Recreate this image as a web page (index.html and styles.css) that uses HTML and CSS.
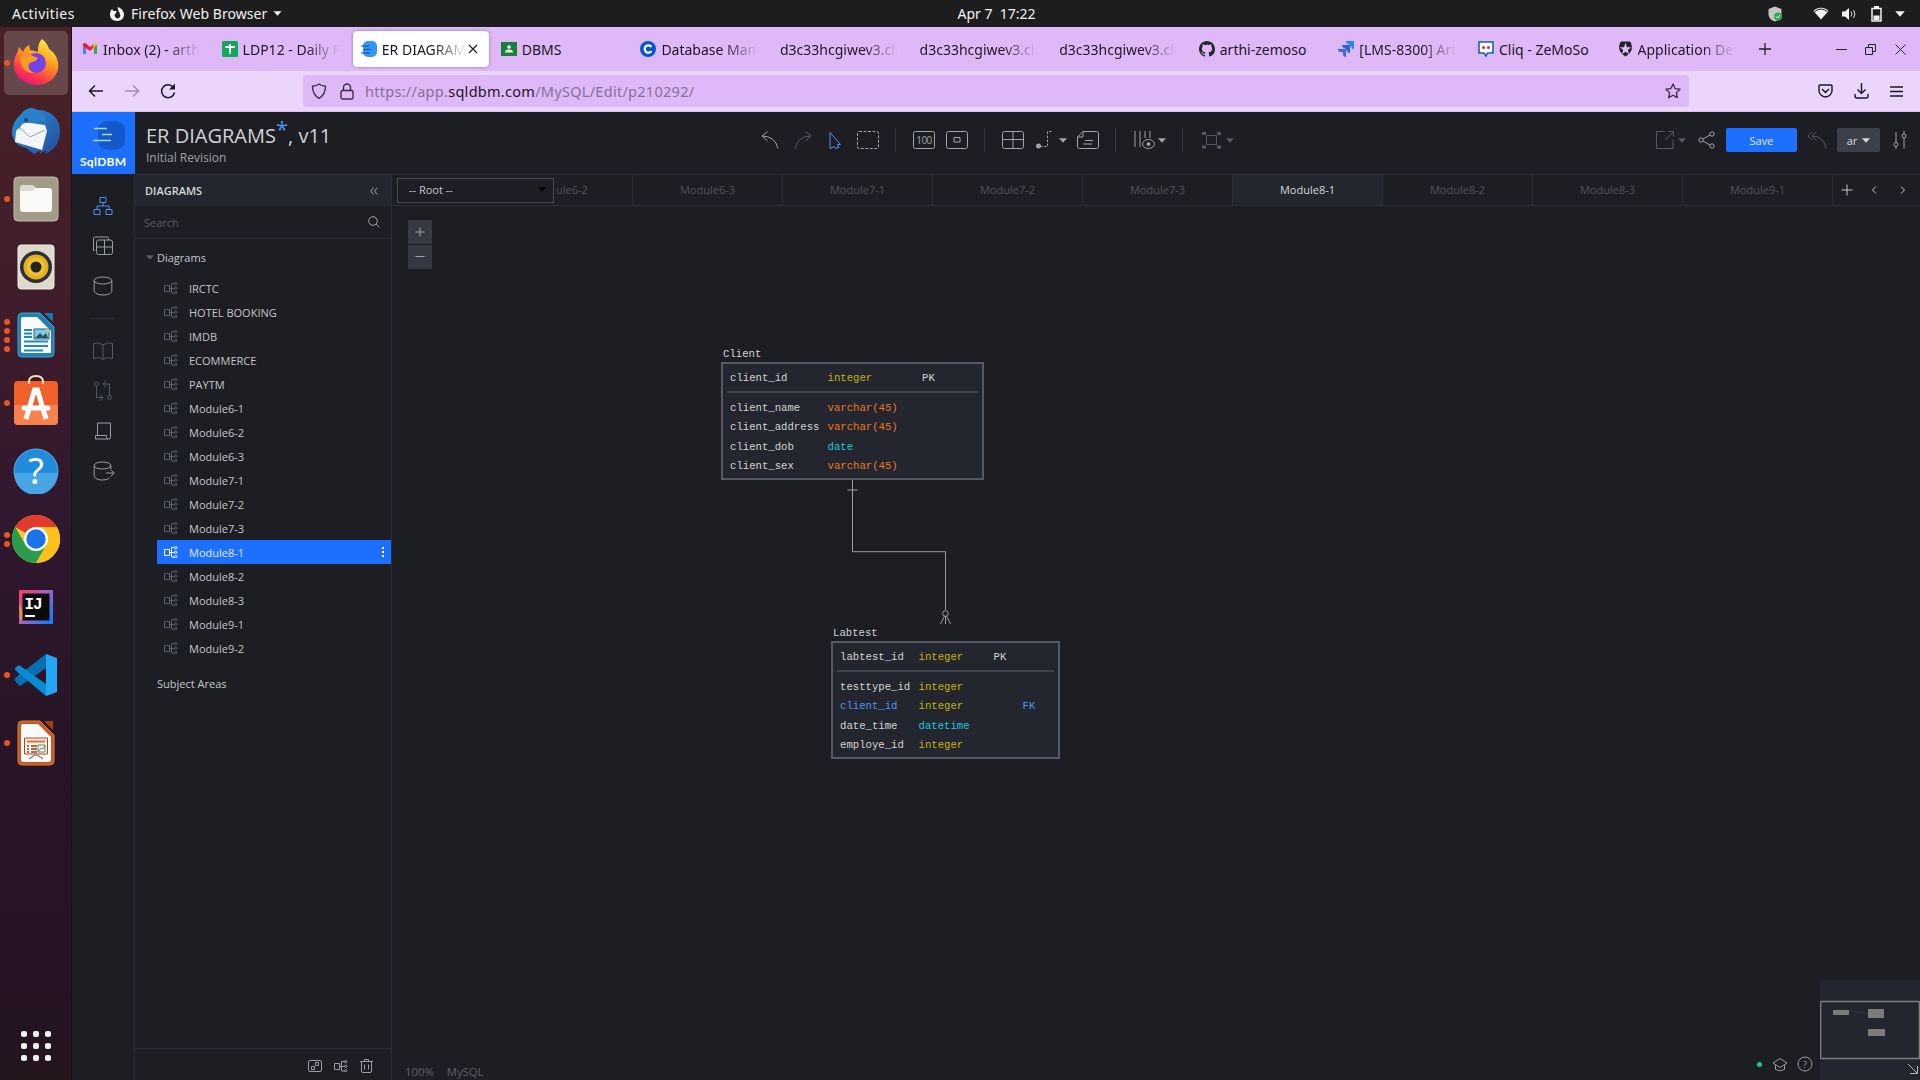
FILE: index.html
```html
<!DOCTYPE html>
<html lang="en">
<head>
<meta charset="utf-8">
<title>ER DIAGRAMS - SqlDBM</title>
<link rel="stylesheet" href="styles.css">
</head>
<body>
<svg class="defs" width="0" height="0">
  <symbol id="i-diagram" viewBox="0 0 14 12"><g fill="none" stroke="currentColor"><path d="M.5 3.500h5v6h-5zM5.500 6.500h5M10.500 1.500h-3v9.500h3"/><circle cx="11.700" cy="1.700" r="1.200"/><circle cx="11.700" cy="6.300" r="1.200"/><circle cx="11.700" cy="10.700" r="1.200"/></g></symbol>
  <symbol id="i-caret" viewBox="0 0 8 5"><path d="M0 .2h8L4 4.800z" fill="currentColor"/></symbol>
</svg>

<header class="topbar">
  <span class="activities">Activities</span>
  <span class="appmenu">
    <svg width="16" height="16" viewBox="0 0 16 16"><path d="M3 3l1.500 2L8 5 6.500 7.500A2.800 2.800 0 1 0 10.800 8c-.2-3-2.300-3-2-7C12 2 14 4.500 14.300 6l.7 1c.5 5-2.500 8-7 8S.5 12 1 7.500C1.300 5.500 2 4.500 3 3z" fill="#f2f2f2"/></svg>
    Firefox Web Browser
    <svg class="caret" width="9" height="5"><use href="#i-caret"/></svg>
  </span>
  <span class="clock">Apr 7&nbsp; 17:22</span>
  <span class="tray">
    <svg class="t-shield" width="15" height="16" viewBox="0 0 15 16"><path d="M7 .5L13.500 3v5c0 4-3 6.500-6.500 7.500C3.500 14.500.5 12 .5 8V3z" fill="#c4c9c7"/><circle cx="10" cy="10.500" r="4" fill="#35a853"/><path d="M8 10.500l1.500 1.500 2.500-3" stroke="#fff" fill="none"/></svg>
    <svg class="t-wifi" width="16" height="13" viewBox="0 0 16 13"><path d="M.5 4C4.500-.3 11.500-.3 15.500 4L8 12.500z" fill="#f2f2f2"/><path d="M1.500 4.800c4-3.500 9-3.500 13 0" stroke="#1d1d1d" fill="none"/></svg>
    <svg class="t-vol" width="16" height="14" viewBox="0 0 16 14"><path d="M1 4.500h3L8 1v12L4 9.500H1z" fill="#f2f2f2"/><path d="M10 4.500q2 2.500 0 5M12.500 3q3 4 0 8" stroke="#ddd" fill="none"/></svg>
    <svg class="t-bat" width="11" height="16" viewBox="0 0 11 16"><path d="M1 2.500h9v12.500H1z" fill="none" stroke="#f2f2f2" stroke-width="1.500"/><path d="M3 0h5v2H3zM2.500 9.500h6V14h-6z" fill="#f2f2f2"/></svg>
    <svg width="10" height="6"><use href="#i-caret" color="#f2f2f2"/></svg>
  </span>
</header>

<div class="desktop">
<nav class="dock">
  <div class="dock-item active"><i class="dots"><b></b></i>
    <svg class="up" width="48" height="48" viewBox="0 0 48 48"><defs><linearGradient id="ff" x1=".8" y1="0" x2=".3" y2="1"><stop offset="0" stop-color="#fff44f"/><stop offset=".4" stop-color="#ffa21f"/><stop offset=".75" stop-color="#ff3f46"/><stop offset="1" stop-color="#e5127d"/></linearGradient></defs><path d="M30 1c5 4 6 7 7 10 7 4 10 12 9 20-2 10-11 16-21 16S3 40 2 29C1 22 4 17 6 13l1-4 4 5c1-3 3-5 6-7l1 5c3 1 6 1 8 2 0-6 1-10 4-13z" fill="url(#ff)"/><circle cx="24" cy="25" r="10" fill="#7542e5"/><path d="M8 20c5-5 9-5 13-2l5 2c-3 5-7 3-9 6-2 5 2 8 6 9-8 1-15-5-15-15z" fill="#ff9b24"/></svg></div>
  <div class="dock-item">
    <svg width="50" height="50" viewBox="0 0 50 50"><defs><linearGradient id="tb" x1="0" y1="0" x2="1" y2="1"><stop offset="0" stop-color="#2695dc"/><stop offset="1" stop-color="#264b9c"/></linearGradient></defs><path d="M10 8C15 2 20 0 27 4c12 0 22 8 22 21 0 11-5 19-15 23l1-4-6 4 1-4-7 4-8-6C6 40 1 34 1 26 1 20 4 14 10 8z" fill="url(#tb)"/><path d="M5 25l8-9 21 3 2 6-5 19L4 36z" fill="#f4f5f6"/><path d="M8 21l11 10 15-7" fill="none" stroke="#9aa4ae"/><path d="M8 24c-1-9 5-18 14-20 6-1 12 3 13 12-6-1-12-1-16 1-6 0-8-1-11 7z" fill="#2b80c8"/><circle cx="15" cy="14" r="2" fill="#174775"/></svg></div>
  <div class="dock-item"><i class="dots"><b></b></i>
    <svg width="46" height="46" viewBox="0 0 46 46"><rect x="1" y="1" width="44" height="44" rx="4" fill="#a29b88" stroke="#c2bbab"/><path d="M7 12q0-3 3-3h10l4 4h12q3 0 3 3v17H7z" fill="#dedad1"/><rect x="7" y="15" width="32" height="21" rx="3" fill="#faf9f8"/><path d="M7 20v-5h12l4-3h13q3 0 3 3v5z" fill="#faf9f8"/></svg></div>
  <div class="dock-item">
    <svg width="38" height="46" viewBox="0 0 38 46"><rect x="1" y="1" width="36" height="44" rx="3" fill="#ded9cd" stroke="#efebe3"/><circle cx="19" cy="23" r="16" fill="#2c2f3b"/><circle cx="19" cy="23" r="12.500" fill="#e3b21a"/><circle cx="19" cy="23" r="9" fill="#efc434"/><circle cx="19" cy="23" r="5.500" fill="#242424"/></svg></div>
  <div class="dock-item"><i class="dots"><b></b><b></b><b></b><b></b></i>
    <svg width="38" height="46" viewBox="0 0 38 46"><path d="M5 1h18l14 14v26q0 4-4 4H5q-4 0-4-4V5q0-4 4-4z" fill="#2081b5" stroke="#3fa0cd"/><path d="M6 5h14l14 14v22H6q-2 0-2-2V7q0-2 2-2z" fill="#fafafa"/><path d="M27 1h9v9z" fill="#1778ad"/><path d="M7 18h8M7 21.500h8M7 25h8M7 29.500h24M7 34h24M7 38.500h19" stroke="#2387bd" stroke-width="2"/><path d="M17 17h15v10H17z" fill="#7ccae9" stroke="#17658f"/><path d="M18 26l5-5 3 3 3-3 2 5z" fill="#355052"/><path d="M28 17h4v4z" fill="#f1c232"/></svg></div>
  <div class="dock-item"><i class="dots"><b></b></i>
    <svg class="software" width="46" height="52" viewBox="0 0 46 52"><path d="M1 11q0-4 4-4h36q4 0 4 4v36q0 4-4 4H5q-4 0-4-4z" fill="#f0602a"/><path d="M1 31h44v16q0 4-4 4H5q-4 0-4-4z" fill="#f5824d"/><path d="M16 10V8q0-6 7-6t7 6v2" fill="none" stroke="#f5dfbd" stroke-width="2"/><path d="M13 45l8.500-29h3L33 45" fill="none" stroke="#fff" stroke-width="5"/><path d="M11 34h24" stroke="#fff" stroke-width="5" stroke-linecap="round"/></svg></div>
  <div class="dock-item">
    <svg width="46" height="46" viewBox="0 0 46 46"><circle cx="23" cy="23" r="22" fill="#218bdc" stroke="#58b0ec"/><path d="M1 25a22 22 0 0 0 44 0z" fill="#48a5e5"/><text x="23" y="36" text-anchor="middle" font-family="Noto Sans" font-size="36" fill="#fff">?</text></svg></div>
  <div class="dock-item"><i class="dots"><b></b><b></b></i>
    <svg width="48" height="48" viewBox="0 0 48 48"><circle cx="24" cy="24" r="24" fill="#fcc934"/><path d="M24 24L3.200 12A24 24 0 0 1 44.800 12H24z" fill="#e23b2e"/><path d="M3.200 12A24 24 0 0 0 24 48l10.400-18L24 24 13.600 30z" fill="#2b9c4b"/><path d="M24 12h20.800A24 24 0 0 1 24 48l10.400-18z" fill="#fcc21b"/><circle cx="24" cy="24" r="12" fill="#fff"/><circle cx="24" cy="24" r="9.700" fill="#1a73e8"/></svg></div>
  <div class="dock-item">
    <svg width="34" height="34" viewBox="0 0 34 34"><defs><linearGradient id="ij" x1="0" x2="1" y1="0" y2=".8"><stop offset="0" stop-color="#fe3869"/><stop offset=".5" stop-color="#aa61ba"/><stop offset="1" stop-color="#157eff"/></linearGradient></defs><path d="M0 0h34v34H0z" fill="url(#ij)"/><path d="M0 13l6 14-5 4z" fill="#d9964b"/><path d="M3.500 3.500h27v27h-27z" fill="#0b0b0c"/><text x="5.500" y="19" font-family="Liberation Mono" font-weight="bold" font-size="16" letter-spacing="-1" fill="#fff">IJ</text><path d="M6 25h10v2H6z" fill="#fff"/></svg></div>
  <div class="dock-item"><i class="dots"><b></b></i>
    <svg width="42" height="42" viewBox="0 0 42 42"><path d="M31 0v14L5 32l-5-5V24z" fill="#0870b0"/><path d="M4 11L31 30v12L0 16v-2z" fill="#078bd2"/><path d="M31 0l11 4v34l-11 4z" fill="#24a7f2"/></svg></div>
  <div class="dock-item"><i class="dots"><b></b></i>
    <svg width="38" height="46" viewBox="0 0 38 46"><path d="M5 1h18l14 14v26q0 4-4 4H5q-4 0-4-4V5q0-4 4-4z" fill="#c75a20" stroke="#dc7b3b"/><path d="M6 4h15l13 13v23q0 2-2 2H6q-2 0-2-2V6q0-2 2-2z" fill="#fafafa"/><path d="M27 1h9v9z" fill="#a34412"/><path d="M7.500 18h23v16h-23z" fill="#fff5ec" stroke="#b04716"/><path d="M10 21.500h18" stroke="#dc702c" stroke-width="2"/><path d="M10 26h2m-2 3h2m-2 3h2m2-6h6m-6 3h6m-6 3h6" stroke="#8e3b13" stroke-width="1.500"/><path d="M21 25h7v7h-7z" fill="#fff" stroke="#777"/><path d="M22 31l2-3 2 1 1.500-3" stroke="#39a643" fill="none"/><path d="M12 39l6-4h2l6 4" stroke="#888" stroke-width="1.500" fill="none"/></svg></div>
  <div class="apps"><b></b><b></b><b></b><b></b><b></b><b></b><b></b><b></b><b></b></div>
</nav>

<main class="window">
  <div class="tabstrip">
    <div class="btab"><svg width="16" height="16" viewBox="0 0 16 16"><path d="M1 3.500V13h3V6z" fill="#4285f4"/><path d="M12 6v7h3V3.500z" fill="#34a853"/><path d="M1 5V3.500C1 2 3 1.500 4 2.500l4 3.500v4z" fill="#ea1c2e"/><path d="M8 6l3.500-3V7L8 10z" fill="#e0344a"/><path d="M11.500 3c1.500-1.500 3.500-.7 3.500 1l-3.500 3z" fill="#fbbc04"/></svg><span>Inbox (2) - arthi</span></div>
    <div class="btab"><svg width="16" height="16" viewBox="0 0 16 16"><rect width="16" height="16" rx="1.500" fill="#0fa958"/><path d="M3 6h10M8 3v10" stroke="#fff" stroke-width="2"/></svg><span>LDP12 - Daily Pro</span></div>
    <div class="btab current"><svg width="16" height="16" viewBox="0 0 16 16"><rect x="2" y="0" width="14" height="16" rx="5" fill="#3395ff"/><path d="M0 5h8M3 8.500h7M0 12h9" stroke="#13508f" stroke-width="1.200"/></svg><span>ER DIAGRAMS</span><svg class="close" width="10" height="10" viewBox="0 0 10 10"><path d="M1 1l8 8M9 1L1 9" stroke="#222" stroke-width="1.200"/></svg></div>
    <div class="btab"><svg width="16" height="16" viewBox="0 0 16 16"><path d="M0 1h16v14H0z" fill="#188038"/><circle cx="8" cy="6" r="1.800" fill="#fff"/><path d="M4 11.500q0-3 4-3t4 3z" fill="#fff"/></svg><span>DBMS</span></div>
    <div class="btab"><svg width="16" height="16" viewBox="0 0 16 16"><circle cx="8" cy="8" r="8" fill="#0056d2"/><path d="M11.500 6A3.700 3.700 0 1 0 11.500 10" fill="none" stroke="#fff" stroke-width="2.200"/></svg><span>Database Manag</span></div>
    <div class="btab"><span>d3c33hcgiwev3.clo</span></div>
    <div class="btab"><span>d3c33hcgiwev3.clo</span></div>
    <div class="btab"><span>d3c33hcgiwev3.clo</span></div>
    <div class="btab"><svg width="16" height="16" viewBox="0 0 16 16"><path d="M8 0C3.580 0 0 3.580 0 8c0 3.540 2.290 6.530 5.470 7.590.4.070.55-.17.55-.38 0-.19-.01-.82-.01-1.490-2.010.37-2.530-.49-2.690-.94-.09-.23-.48-.94-.82-1.130-.28-.15-.68-.52-.01-.53.63-.01 1.080.58 1.230.82.72 1.210 1.870.87 2.330.66.070-.52.28-.87.51-1.070-1.780-.2-3.640-.89-3.640-3.950 0-.87.31-1.590.82-2.150-.08-.2-.36-1.020.08-2.120 0 0 .67-.21 2.200.82.640-.18 1.320-.27 2-.27s1.360.09 2 .27c1.530-1.040 2.200-.82 2.200-.82.44 1.100.16 1.920.08 2.120.51.56.82 1.270.82 2.150 0 3.070-1.870 3.750-3.650 3.950.29.25.54.73.54 1.480 0 1.070-.01 1.930-.01 2.200 0 .21.150.46.55.38A8.010 8.010 0 0 0 16 8c0-4.420-3.580-8-8-8z" fill="#24292f"/></svg><span>arthi-zemoso</span></div>
    <div class="btab"><svg width="16" height="16" viewBox="0 0 16 16"><path d="M8 0h8v8q-3 0-3-3h-2V3Q8 3 8 0z" fill="#2684ff"/><path d="M4 4h8v8q-3 0-3-3H7V7Q4 7 4 4z" fill="#2464dd"/><path d="M0 8h8v8q-3 0-3-3v-2H3Q0 11 0 8z" fill="#3764f5"/></svg><span>[LMS-8300] Artic</span></div>
    <div class="btab"><svg width="16" height="16" viewBox="0 0 16 16"><path d="M1 1h14v11H9.500L8 15l-2-3H1z" fill="#fff" stroke="#1262ad" stroke-width="1.600"/><circle cx="5.500" cy="6.500" r="1.500" fill="#e42527"/><circle cx="10.500" cy="6.500" r="1.500" fill="#e42527"/></svg><span>Cliq - ZeMoSo</span></div>
    <div class="btab"><svg width="15" height="16" viewBox="0 0 16 16"><path d="M3 0h10q3 5 1 10-2 4-6 6-4-2-6-6Q0 5 3 0z" fill="#20242b"/><path d="M8 1l1.500 5H14l-3.500 3 1.300 4.500L8 11l-3.800 2.500L5.500 9 2 6h4.500z" fill="#e0bbf8"/></svg><span>Application Deta</span></div>
    <div class="winctl">
      <svg width="12" height="12" viewBox="0 0 12 12"><path d="M6 0v12M0 6h12" stroke="#222" stroke-width="1.300"/></svg>
      <svg width="11" height="11" viewBox="0 0 11 11"><path d="M0 5.500h11" stroke="#222"/></svg>
      <svg width="11" height="11" viewBox="0 0 11 11"><path d="M.5 3.500h7v7h-7zM3.500 3V.5h7v7H8" fill="none" stroke="#222"/></svg>
      <svg width="11" height="11" viewBox="0 0 11 11"><path d="M.5.5l10 10M10.500.5l-10 10" stroke="#222"/></svg>
    </div>
  </div>
  <div class="navbar">
    <div class="navbtns">
      <svg width="16" height="14" viewBox="0 0 16 14"><path d="M15 7H1.500M7 1.500L1.500 7 7 12.500" fill="none" stroke="#1d1624" stroke-width="1.500"/></svg>
      <svg width="16" height="14" viewBox="0 0 16 14"><path d="M1 7h13.500M9 1.500L14.500 7 9 12.500" fill="none" stroke="#a38fb0" stroke-width="1.500"/></svg>
      <svg width="16" height="16" viewBox="0 0 16 16"><path d="M13.500 4.500A6.500 6.500 0 1 0 14.500 9.500" fill="none" stroke="#1d1624" stroke-width="1.500"/><path d="M15 .5v6H9z" fill="#1d1624"/></svg>
    </div>
    <div class="urlbar">
      <svg width="16" height="16" viewBox="0 0 16 16"><path d="M8 1c2 1.500 4 2 6.500 2.300 0 5-1 9-6.500 12-5.500-3-6.500-7-6.500-12C4 3 6 2.500 8 1z" fill="none" stroke="#3b2d48" stroke-width="1.400"/></svg>
      <svg class="lock" width="14" height="17" viewBox="0 0 14 17"><rect x="1" y="7.500" width="12" height="8.500" rx="1.500" fill="none" stroke="#3b2d48" stroke-width="1.400"/><path d="M3.500 7.500V4.500a3.500 3.500 0 0 1 7 0v3" fill="none" stroke="#3b2d48" stroke-width="1.400"/></svg>
      <span class="url">https://app.<b>sqldbm.com</b>/MySQL/Edit/p210292/</span>
      <svg class="star" width="16" height="16" viewBox="0 0 16 16"><path d="M8 1l2.100 4.600 4.900.6-3.600 3.400.9 5L8 12.200l-4.300 2.400.9-5L1 6.200l4.900-.6z" fill="none" stroke="#3b2d48" stroke-width="1.300" stroke-linejoin="round"/></svg>
    </div>
    <div class="navend">
      <svg width="15" height="14" viewBox="0 0 15 14"><path d="M2 1h11q1 0 1 1v4.500a6.500 6.500 0 0 1-13 0V2q0-1 1-1zM4 5l3.500 3.500L11 5" fill="none" stroke="#1d1624" stroke-width="1.400"/></svg>
      <svg width="15" height="16" viewBox="0 0 15 16"><path d="M7.500 0v10M3.500 6.500l4 4 4-4M1 11v2q0 2 2 2h9q2 0 2-2v-2" fill="none" stroke="#1d1624" stroke-width="1.400"/></svg>
      <svg width="13" height="11" viewBox="0 0 13 11"><path d="M0 1h13M0 5.500h13M0 10h13" stroke="#1d1624" stroke-width="1.400"/></svg>
    </div>
  </div>

  <div class="app">
    <aside class="rail">
      <div class="logo"><svg width="34" height="30" viewBox="0 0 34 30"><path d="M5 8Q6 0 18.500 0T32 8v13q-1 8-13.500 8T5 21z" fill="#1458c9"/><path d="M1 7.500h13M9 13.500h10M0 19.500h18" stroke="#a5d9ff" stroke-width="1.500"/></svg><span>SqlDBM</span></div>
      <div class="railicons">
        <svg class="blue" width="20" height="20" viewBox="0 0 20 20"><path d="M7 1.500h6v5H7zM1 13.500h6v5H1zM13 13.500h6v5h-6zM4 13.500v-3.500h12v3.500M10 6.500V10"/></svg>
        <svg width="20" height="20" viewBox="0 0 20 20"><path d="M2 14.500H.500V2.500q0-1.500 1.500-1.500h12q1.500 0 1.500 1.500V4"/><rect x="3.500" y="4" width="16" height="14.500" rx="2"/><path d="M11.500 4v14.500M3.500 11h16"/></svg>
        <svg width="20" height="20" viewBox="0 0 20 20"><ellipse cx="10" cy="4.500" rx="8.800" ry="3.500"/><path d="M1.200 4.500v11q2 3.500 8.800 3.500t8.800-3.500v-11"/></svg>
        <i class="railsep"></i>
        <svg class="dim" width="20" height="20" viewBox="0 0 20 20"><path d="M10 4Q6 .5.500 2.500v15Q6 15 10 18.500 14 15 19.500 17.500v-15Q14 .5 10 4zM10 4v14.500"/></svg>
        <svg class="dim" width="20" height="20" viewBox="0 0 20 20"><circle cx="3.500" cy="3" r="2"/><circle cx="16.500" cy="16.500" r="2"/><path d="M3.500 5v11.500h6M7 13.500l3 3-3 3M16.500 14.500V3h-6M13 0l-3 3 3 3"/></svg>
        <svg width="20" height="20" viewBox="0 0 20 20"><path d="M4.500 14.500V2h13v14.500q0 1.500-1.500 1.500H2.500V14.500h11v2q0 1.500 1.500 1.500"/></svg>
        <svg class="dbout" width="22" height="20" viewBox="0 0 22 20"><ellipse cx="9.500" cy="4.500" rx="8.300" ry="3.500"/><path d="M1.200 4.500v11q2 3.500 8.300 3.500 5 0 7-2M17.800 4.500V8M13 12h8M17.500 8.500L21.200 12l-3.700 3.500"/></svg>
      </div>
    </aside>

    <div class="main">
      <header class="apphead">
        <div class="title"><h1>ER DIAGRAMS<sup>*</sup>, v11</h1><p>Initial Revision</p></div>
        <div class="tools">
          <div class="group"><a><svg width="18" height="18" viewBox="0 0 18 18"><path d="M6.500.5L1 5l5.500 5M1 5Q14 5 17 17.500"/></svg></a><a class="dim"><svg width="18" height="18" viewBox="0 0 18 18"><path d="M11.500.5L17 5l-5.500 5M17 5Q4 5 1 17.500"/></svg></a><a class="blue"><svg width="14" height="19" viewBox="0 0 14 19"><path d="M2 1.500l10.500 12H9.500l1.500 3h-2l-1 1.500-1.500-2.500L2 17.500z"/></svg></a><a><svg width="22" height="18" viewBox="0 0 22 18"><rect x=".5" y=".5" width="21" height="17" rx="1.500" stroke-dasharray="3 1.500"/></svg></a></div>
          <div class="group"><a><svg width="22" height="18" viewBox="0 0 22 18"><rect x=".5" y=".5" width="21" height="17" rx="2"/><text x="11" y="12.800" text-anchor="middle" class="hundred">100</text></svg></a><a><svg width="22" height="18" viewBox="0 0 22 18"><rect x=".5" y=".5" width="21" height="17" rx="2"/><path d="M8 6.500h6v4.500H8z"/></svg></a></div>
          <div class="group"><a><svg width="22" height="18" viewBox="0 0 22 18"><rect x=".5" y=".5" width="21" height="17" rx="2"/><path d="M11 .5v17M.5 8.500h21"/></svg></a><a class="wide"><svg width="18" height="18" viewBox="0 0 18 18"><path d="M5 15.500h7.500V.5H18" stroke-dasharray="2.500 1.500"/><circle cx="3.500" cy="15" r="2.500" fill="currentColor" stroke="none"/></svg><svg class="car" width="8" height="5"><use href="#i-caret"/></svg></a><a><svg width="22" height="18" viewBox="0 0 22 18"><path d="M6 .5h13.500q2 0 2 2v13q0 2-2 2h-17q-2 0-2-2V6zM6 .5V6H.5M8 9.500h8M6 13h9"/></svg></a></div>
          <div class="group"><a class="wide43"><svg width="21" height="20" viewBox="0 0 21 20"><path d="M1 1v16M6 1v16M11 1v7M16 1v7"/><ellipse cx="14.500" cy="14" rx="6" ry="4.500"/><circle cx="14.500" cy="14" r="1.500" fill="currentColor"/></svg><svg class="car" width="8" height="5"><use href="#i-caret"/></svg></a></div>
          <div class="group"><a class="dim wide45"><svg width="19" height="18" viewBox="0 0 19 18"><path d="M4.500 4.500h10v9h-10z"/><path d="M0 1h4v3H0zM15 1h4v3h-4zM0 14.500h4v3H0zM15 14.500h4v3h-4z" fill="currentColor" stroke="none"/></svg><svg class="car" width="8" height="5"><use href="#i-caret"/></svg></a></div>
        </div>
        <div class="actions">
          <a class="dim export"><svg width="19" height="18" viewBox="0 0 19 18"><path d="M9 .5H.5v17H17V9M9 9l8.500-8M12 .5h5.500V6"/></svg><svg class="car" width="8" height="5"><use href="#i-caret"/></svg></a>
          <a class="share"><svg width="17" height="18" viewBox="0 0 17 18"><circle cx="14" cy="3" r="2.200"/><circle cx="3" cy="9" r="2.200"/><circle cx="14" cy="15" r="2.200"/><path d="M5 8L12 4M5 10l7 4"/></svg></a>
          <button class="save">Save</button>
          <a class="dim reply"><svg width="20" height="18" viewBox="0 0 20 18"><path d="M5.500.5L1 5l4.500 4.500M9.500.5L5 5l4.500 4.500M5 5Q17 5 19 17.500"/></svg></a>
          <button class="user">ar <svg width="8" height="5"><use href="#i-caret"/></svg></button>
          <a class="sliders"><svg width="14" height="18" viewBox="0 0 14 18"><path d="M3 1v10.500M3 15.500V18M11 0v3M11 7v10.500"/><circle cx="3" cy="13.500" r="2"/><circle cx="11" cy="5" r="2"/></svg></a>
        </div>
      </header>

      <div class="work">
        <section class="panel">
          <div class="panelhead">DIAGRAMS<svg width="8" height="8" viewBox="0 0 8 8"><path d="M3.500.5L.8 4l2.700 3.500M7.200.5L4.500 4l2.700 3.500"/></svg></div>
          <div class="search">Search<svg width="12" height="12" viewBox="0 0 12 12"><circle cx="5" cy="5" r="4.300"/><path d="M8 8l3.500 3.500"/></svg></div>
          <div class="tree">
            <div class="root"><svg width="8" height="5"><use href="#i-caret"/></svg>Diagrams</div>
            <ul>
              <li><svg width="14" height="12"><use href="#i-diagram"/></svg>IRCTC</li>
              <li><svg width="14" height="12"><use href="#i-diagram"/></svg>HOTEL BOOKING</li>
              <li><svg width="14" height="12"><use href="#i-diagram"/></svg>IMDB</li>
              <li><svg width="14" height="12"><use href="#i-diagram"/></svg>ECOMMERCE</li>
              <li><svg width="14" height="12"><use href="#i-diagram"/></svg>PAYTM</li>
              <li><svg width="14" height="12"><use href="#i-diagram"/></svg>Module6-1</li>
              <li><svg width="14" height="12"><use href="#i-diagram"/></svg>Module6-2</li>
              <li><svg width="14" height="12"><use href="#i-diagram"/></svg>Module6-3</li>
              <li><svg width="14" height="12"><use href="#i-diagram"/></svg>Module7-1</li>
              <li><svg width="14" height="12"><use href="#i-diagram"/></svg>Module7-2</li>
              <li><svg width="14" height="12"><use href="#i-diagram"/></svg>Module7-3</li>
              <li class="selected"><svg width="14" height="12"><use href="#i-diagram"/></svg>Module8-1<span class="kebab"><b></b><b></b><b></b></span></li>
              <li><svg width="14" height="12"><use href="#i-diagram"/></svg>Module8-2</li>
              <li><svg width="14" height="12"><use href="#i-diagram"/></svg>Module8-3</li>
              <li><svg width="14" height="12"><use href="#i-diagram"/></svg>Module9-1</li>
              <li><svg width="14" height="12"><use href="#i-diagram"/></svg>Module9-2</li>
            </ul>
            <div class="subject">Subject Areas</div>
          </div>
          <div class="panelfoot">
            <svg width="14" height="12" viewBox="0 0 14 12"><rect x=".5" y=".5" width="13" height="11" rx="1.500"/><path d="M3.500 6.500h3v3h-3zM7.500 2.500h3v3h-3z"/></svg>
            <svg width="14" height="12"><use href="#i-diagram"/></svg>
            <svg width="13" height="14" viewBox="0 0 13 14"><path d="M0 2.500h13M1.500 2.500V12q0 1.500 1.500 1.500h7q1.500 0 1.500-1.500V2.500M4.500 2.500v-2h4v2M4.500 5.500v5M8.500 5.500v5"/></svg>
          </div>
        </section>

        <section class="stage">
          <div class="dtabs">
            <div class="rootsel">-- Root --<svg width="8" height="5"><use href="#i-caret"/></svg></div>
            <div class="dtab cut">ule6-2</div>
            <div class="dtab">Module6-3</div>
            <div class="dtab">Module7-1</div>
            <div class="dtab">Module7-2</div>
            <div class="dtab">Module7-3</div>
            <div class="dtab on">Module8-1</div>
            <div class="dtab">Module8-2</div>
            <div class="dtab">Module8-3</div>
            <div class="dtab">Module9-1</div>
            <div class="dctl">
              <svg width="12" height="12" viewBox="0 0 12 12"><path d="M6 .5v11M.5 6h11"/></svg>
              <svg width="6" height="8" viewBox="0 0 6 8"><path d="M5 .5L1.500 4 5 7.500"/></svg>
              <svg width="6" height="8" viewBox="0 0 6 8"><path d="M1 .5L4.500 4 1 7.500"/></svg>
            </div>
          </div>
          <div class="canvas">
            <div class="zoomer"><button><svg width="10" height="10" viewBox="0 0 10 10"><path d="M5 .5v9M.5 5h9"/></svg></button><button><svg width="10" height="10" viewBox="0 0 10 10"><path d="M.5 4.500h9"/></svg></button></div>

            <svg class="link" width="110" height="146" viewBox="0 0 110 146"><path d="M10.500 0v71.700h93v58.300M5.500 10h10M103.500 136v8M102.500 136l-4 8M104.500 136l4 8"/><circle cx="103.500" cy="133.500" r="2.800"/></svg>

            <div class="entity client">
              <div class="ename">Client</div>
              <div class="ebox">
                <div class="erow key"><span>client_id</span><span class="int">integer</span><span>PK</span><span></span></div>
                <div class="erow"><span>client_name</span><span class="chr">varchar(45)</span></div>
                <div class="erow"><span>client_address</span><span class="chr">varchar(45)</span></div>
                <div class="erow"><span>client_dob</span><span class="dat">date</span></div>
                <div class="erow"><span>client_sex</span><span class="chr">varchar(45)</span></div>
              </div>
            </div>
            <div class="entity labtest">
              <div class="ename">Labtest</div>
              <div class="ebox">
                <div class="erow key"><span>labtest_id</span><span class="int">integer</span><span>PK</span><span></span></div>
                <div class="erow"><span>testtype_id</span><span class="int">integer</span></div>
                <div class="erow"><span class="fk">client_id</span><span class="int">integer</span><span></span><span class="fk">FK</span></div>
                <div class="erow"><span>date_time</span><span class="dat">datetime</span></div>
                <div class="erow"><span>employe_id</span><span class="int">integer</span></div>
              </div>
            </div>

            <div class="status"><span>100%</span><span>MySQL</span></div>
            <div class="help">
              <i class="online"></i>
              <svg width="16" height="15" viewBox="0 0 16 15"><path d="M8 1.500l7 4.500-7 4.500L1 6zM3.500 8v4.500Q8 15 12.500 12.500V8"/></svg>
              <svg width="16" height="16" viewBox="0 0 16 16"><circle cx="8" cy="8" r="7"/><text x="8" y="11.500" text-anchor="middle" class="q">?</text></svg>
            </div>
            <div class="minimap">
              <svg width="100" height="100" viewBox="0 0 100 100"><path d="M.5 21.500h99v57H.5z" fill="none" stroke="#7d7e80" stroke-width="1.700"/><path d="M13 30h16v5H13zM48 29h16v9H48zM48 49h17v7H48z" fill="#7c7c7c"/><path d="M29 31l19 2" stroke="#31353b"/><path d="M88 84l9 9M90 93.500h7.500V86" fill="none" stroke="#b4b5b8"/></svg>
            </div>
          </div>
        </section>
      </div>
    </div>
  </div>
</main>
</div>
</body>
</html>
```
FILE: styles.css
```css
* { box-sizing: border-box; }
body { margin: 0; width: 1920px; height: 1080px; overflow: hidden; background: #1d1e23; font: 11px "Open Sans", "Noto Sans", sans-serif; color: #c3c6cc; display: flex; flex-direction: column; }
svg { display: block; flex: none; }
.defs { position: absolute; }
button { border: 0; padding: 0; font: inherit; color: inherit; }

.topbar { height: 27px; flex: none; background: #1d1d1d; color: #f2f2f2; font: 14px "Noto Sans", sans-serif; display: grid; grid-template-columns: 97px 783px 233px 1fr; align-items: center; }
.activities { padding-left: 12px; letter-spacing: .45px; }
.appmenu { display: flex; align-items: center; gap: 6px; padding-left: 12px; letter-spacing: .05px; }
.clock { text-align: center; }
.tray { display: flex; align-items: center; justify-content: flex-end; padding-right: 15px; }
.t-shield { margin-right: 30px; }
.t-wifi { margin-right: 12px; }
.t-vol { margin-right: 14px; }
.t-bat { margin-right: 13px; }

.desktop { flex: 1; display: flex; min-height: 0; }
.dock { width: 72px; flex: none; background: linear-gradient(#4a2226, #3d1c2b 30%, #30182e 45%, #291528 65%, #251325 92%, #24151d); border-right: 1px solid #191219; display: flex; flex-direction: column; align-items: center; padding-top: 4px; }
.dock-item { width: 64px; height: 64px; margin-bottom: 4px; border-radius: 5px; display: flex; align-items: center; justify-content: center; flex: none; position: relative; }
.dock-item.active { background: #66484b; }
.up { margin-bottom: 2px; }
.software { margin-bottom: 7px; }
.dots { position: absolute; left: 0; top: 0; height: 64px; display: flex; flex-direction: column; justify-content: center; gap: 3px; }
.dots b { width: 6px; height: 6px; border-radius: 3px; background: #e95420; }
.apps { margin-top: auto; margin-bottom: 19px; display: grid; grid-template-columns: repeat(3, 6px); gap: 6px; }
.apps b { width: 6px; height: 6px; border-radius: 2px; background: #f3f0f0; }

.window { flex: 1; min-width: 0; display: flex; flex-direction: column; }
.tabstrip { height: 44px; flex: none; background: #dfb9f7; display: flex; align-items: center; color: #1d1624; font: 14px "Noto Sans", sans-serif; }
.btab { width: 139.600px; height: 36px; flex: none; display: flex; align-items: center; gap: 5px; padding: 0 12px 0 10px; }
.btab span { flex: 1; white-space: nowrap; overflow: hidden; -webkit-mask-image: linear-gradient(to right, #000 calc(100% - 34px), transparent); mask-image: linear-gradient(to right, #000 calc(100% - 34px), transparent); }
.btab:nth-child(4) span, .btab:nth-child(9) span, .btab:nth-child(11) span { -webkit-mask-image: none; mask-image: none; }
.btab.current { width: 136px; margin: 0 2px 0 1.600px; padding: 0 11px 0 8px; background: #fff; border-radius: 4px; box-shadow: 0 0 3px rgba(70, 30, 90, .5); }
.btab .close { margin-left: -4px; }
.winctl { flex: 1; display: flex; align-items: center; justify-content: space-between; padding: 0 14px 0 12px; }
.winctl svg:first-child { margin-right: 46px; }
.navbar { height: 41px; flex: none; background: #ecd5fa; border-bottom: 1px solid #dcc0ee; display: flex; align-items: center; }
.navbtns { width: 231px; display: flex; gap: 20px; padding-left: 16px; align-items: center; }
.urlbar { width: 1386px; height: 32px; background: #dfb9f7; border-radius: 4px; display: flex; align-items: center; padding: 0 8px; }
.lock { margin-left: 13px; }
.url { margin-left: 11px; font: 14.500px "Noto Sans", sans-serif; letter-spacing: .28px; color: #84709a; }
.url b { font-weight: 400; color: #1d1624; }
.star { margin-left: auto; }
.navend { flex: 1; display: flex; justify-content: flex-end; align-items: center; gap: 21px; padding-right: 17px; }

.app { flex: 1; display: flex; min-height: 0; }
.rail { width: 63px; flex: none; border-right: 1px solid #2c2e36; }
.logo { width: 63px; height: 62px; background: #1d6fff; padding: 9px 0 0 21px; color: #fff; font: bold 12px Lato, sans-serif; }
.logo span { display: block; margin: 3px 0 0 -13px; letter-spacing: .3px; white-space: nowrap; }
.railicons { display: flex; flex-direction: column; align-items: center; padding-top: 22px; gap: 20px; }
.railicons svg, .group svg, .actions svg, .panel svg, .dctl svg, .zoomer svg, .help svg { fill: none; stroke: currentColor; }
.railicons svg { color: #9a9da3; }
.railicons .blue { color: #4f8ff7; }
.railicons .dim { color: #565a66; }
.railsep { width: 24px; height: 1px; background: #2f323a; margin: 2px 0 2px; }
.dbout { margin-left: 2px; }

.main { flex: 1; min-width: 0; display: flex; flex-direction: column; }
.apphead { height: 62px; flex: none; display: flex; align-items: flex-start; padding-top: 16px; }
.title { width: 619px; padding-left: 11px; margin-top: -7px; }
h1 { margin: 0; font: 20px/30px "Open Sans", sans-serif; color: #d0d2d6; }
sup { color: #4f8ff7; font-size: 22px; line-height: 0; vertical-align: 6px; }
.title p { margin: -1px 0 0; font-size: 12px; line-height: 16px; color: #a0a3a8; }
.tools { display: flex; height: 24px; color: #a0a3aa; width: 898px; }
.group { display: flex; align-items: center; }
.group + .group { margin-left: 11px; padding-left: 12px; border-left: 1px solid #363941; }
.group a { width: 32.500px; display: flex; justify-content: center; align-items: center; }
.group a.wide { width: 42px; gap: 6px; }
.group a.wide43 { width: 43px; gap: 3px; }
.group a.wide45 { width: 45px; gap: 5px; }
.group .dim, .actions .dim { color: #555965; }
.group .blue { color: #4f8ff7; }
.car { stroke: none !important; }
.hundred { font: 10px "Open Sans"; letter-spacing: -.5px; fill: #a0a3aa; stroke: none; }
.actions { flex: 1; display: flex; align-items: center; color: #a0a3aa; }
.actions a { display: flex; justify-content: center; align-items: center; }
.export { width: 38px; gap: 3px; }
.share { width: 32px; }
.save { width: 71px; height: 24px; background: #1d6fff; color: #e4edff; margin-left: 4px; border-radius: 2px; }
.reply { width: 40px; }
.user { width: 43px; height: 24px; background: #3b404a; color: #d8dade; border-radius: 2px; display: flex; align-items: center; justify-content: center; gap: 5px; }
.actions .user svg { stroke: none; }
.sliders { width: 40px; }

.work { flex: 1; min-height: 0; display: flex; border-top: 1px solid #2c2e36; }
.panel { width: 257px; flex: none; border-right: 1px solid #2c2e36; display: flex; flex-direction: column; }
.panelhead { height: 31px; background: #23262e; display: flex; align-items: center; justify-content: space-between; padding: 0 13px 0 10px; font-weight: 600; font-size: 11px; color: #d4d6da; }
.search { height: 33px; border-bottom: 1px solid #2c2e36; display: flex; align-items: center; justify-content: space-between; padding: 0 11px 0 9px; color: #595c65; }
.search svg { color: #a0a3aa; }
.panelhead svg { color: #a0a3aa; }
.tree { flex: 1; }
.root { display: flex; align-items: center; gap: 3px; padding-left: 11px; height: 37px; }
.panel .root svg { color: #565a66; stroke: none; }
ul { list-style: none; margin: 0; padding: 0 0 0 22px; }
li { height: 24px; display: flex; align-items: center; padding-left: 7px; }
li svg { color: #5d616d; margin-right: 11px; }
.selected { background: #1d6fff; color: #e4edff; }
.selected svg { color: #fff; }
.kebab { margin-left: auto; margin-right: 7px; display: flex; flex-direction: column; gap: 2px; }
.kebab b { width: 2px; height: 2px; background: #fff; }
.subject { padding: 16px 0 0 22px; line-height: 16px; }
.panelfoot { height: 32px; border-top: 1px solid #2c2e36; display: flex; align-items: center; justify-content: flex-end; gap: 12px; padding: 3px 18px 0 0; color: #9a9da3; }

.stage { flex: 1; min-width: 0; display: flex; flex-direction: column; }
.dtabs { height: 31px; flex: none; border-bottom: 1px solid #2c2e36; display: flex; align-items: center; font-size: 11px; color: #50535d; overflow: hidden; }
.rootsel { width: 157px; height: 25px; margin-left: 5px; border: 1px solid #454953; display: flex; align-items: center; justify-content: space-between; padding: 0 7px 2px 11px; color: #c3c6cc; flex: none; }
.rootsel svg { color: #000; }
.dtab { width: 150px; height: 100%; flex: none; border-right: 1px solid #2c2e36; display: flex; align-items: center; justify-content: center; padding-bottom: 1px; }
.dtab.cut { width: 79px; justify-content: flex-start; padding-left: 2px; }
.dtab.on { background: #23262e; color: #d4d6da; }
.dctl { flex: 1; display: flex; align-items: center; color: #c3c6cc; padding-left: 8px; }
.dctl svg:nth-child(2) { margin: 0 23px 0 18px; }
.canvas { flex: 1; position: relative; }
.zoomer { margin: 14px 0 0 16px; width: 24px; display: flex; flex-direction: column; gap: 1px; }
.zoomer button { height: 24px; background: #363941; color: #a0a3aa; display: flex; align-items: center; justify-content: center; }

.entity { position: absolute; font: 10.650px/12px "Liberation Mono", monospace; color: #d3d4d6; }
.client { left: 329px; top: 141px; width: 263px; }
.labtest { left: 439px; top: 420px; width: 229px; }
.ename { height: 15px; padding: 1px 0 0 2px; }
.ebox { height: 118px; border: 2px solid #555965; background: #23262e; padding: 4px 4px 0; }
.erow { height: 19.500px; display: grid; align-items: center; padding-left: 3px; }
.client .erow { grid-template-columns: 97.500px 94.500px 40px 1fr; }
.labtest .erow { grid-template-columns: 78.500px 75px 29px 1fr; }
.erow.key { height: 25px; padding-bottom: 3px; border-bottom: 2px solid #3f434d; margin-bottom: 5px; }
.int { color: #c4b205; }
.chr { color: #f0761c; }
.dat { color: #1fc6de; }
.fk { color: #5590f5; }
.link { position: absolute; left: 450px; top: 274px; fill: none; stroke: #9a9da3; }
.status { position: absolute; left: 13px; bottom: 1px; display: flex; gap: 13px; font-size: 11.300px; color: #5d606b; }
.help { position: absolute; right: 107px; bottom: 8px; display: flex; align-items: center; gap: 9px; color: #9a9da3; }
.online { width: 5px; height: 5px; border-radius: 3px; background: #19c987; margin-right: 1px; }
.q { font: 9px "Open Sans"; fill: #9a9da3; stroke: none; }
.minimap { position: absolute; right: 0; bottom: 0; width: 100px; height: 100px; background: #23262e; }
```
